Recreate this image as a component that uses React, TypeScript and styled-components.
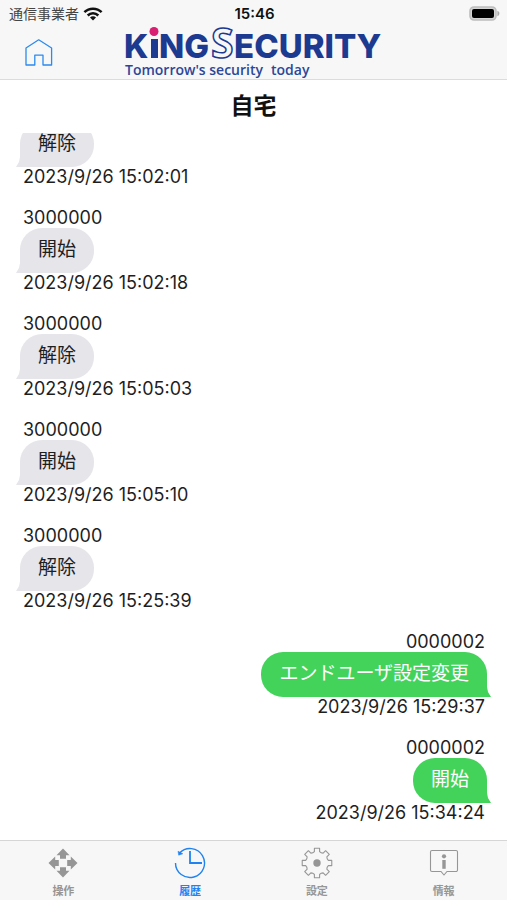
import React from "react";
import styled, { createGlobalStyle } from "styled-components";

const GlobalStyle = createGlobalStyle`
  * { box-sizing: border-box; }
  html, body, #root { height: 100%; }
  body {
    margin: 0;
    background: #fff;
    color: #1e1e1f;
    font-family: Inter, "Noto Sans CJK JP", "Liberation Sans", sans-serif;
  }
`;

const Screen = styled.div`
  display: flex;
  flex-direction: column;
  height: 100vh;
  overflow: hidden;
`;

const Header = styled.header`
  flex: none;
  background: #f7f7f7;
  border-bottom: 1px solid #dcdcdd;
`;

const StatusBar = styled.div`
  display: grid;
  grid-template-columns: 1fr auto 1fr;
  align-items: center;
  height: 27px;
  padding: 0 7px 0 9px;
`;

const Carrier = styled.div`
  display: flex;
  align-items: center;
  gap: 4px;
  font-size: 14px;
  line-height: 20px;
  color: #444;
`;

const Clock = styled.time`
  font-size: 15px;
  font-weight: 600;
  line-height: 20px;
  color: #111;
`;

const Battery = styled.svg`
  justify-self: end;
`;

const NavBar = styled.div`
  display: grid;
  grid-template-columns: 1fr auto 1fr;
  align-items: center;
  height: 52px;
  padding: 0 24px;
`;

const IconButton = styled.button`
  display: flex;
  justify-self: start;
  padding: 0;
  border: 0;
  background: none;
  color: #2b8af0;
  cursor: pointer;
`;

const LogoMark = styled.svg`
  overflow: visible;
`;

const Title = styled.h1`
  flex: none;
  margin: 0;
  padding: 10px 0 11px;
  text-align: center;
  font-size: 23px;
  font-weight: 700;
  line-height: 32px;
  color: #111;
`;

const Log = styled.ol`
  display: flex;
  flex: 1;
  flex-direction: column;
  justify-content: flex-end;
  gap: 21px;
  min-height: 0;
  margin: 0;
  padding: 0 20px 17px;
  overflow: hidden;
  list-style: none;
`;

const Entry = styled.li<{ $own: boolean }>`
  display: flex;
  flex: none;
  flex-direction: column;
  align-items: ${(p) => (p.$own ? "flex-end" : "flex-start")};
`;

const Meta = styled.span`
  padding: 0 2px 0 3px;
  font-size: 18px;
  line-height: 20px;
`;

const Bubble = styled.p<{ $own: boolean }>`
  position: relative;
  margin: 0;
  padding: 8px 18px 9px;
  border-radius: ${(p) => (p.$own ? "22px 22px 0 22px" : "22px 22px 22px 0")};
  background: ${(p) => (p.$own ? "#43d35b" : "#e5e5ea")};
  color: ${(p) => (p.$own ? "#fff" : "#1e1e1f")};
  font-size: 19px;
  line-height: 28px;

  &::after {
    content: "";
    position: absolute;
    bottom: 0;
    ${(p) => (p.$own ? "right: -4px;" : "left: -4px;")}
    width: 5px;
    height: 10px;
    background: inherit;
    clip-path: ${(p) =>
      p.$own
        ? "polygon(0 0, 20% 0, 40% 50%, 100% 100%, 0 100%)"
        : "polygon(100% 0, 80% 0, 60% 50%, 0 100%, 100% 100%)"};
  }
`;

const TabBar = styled.nav`
  display: grid;
  flex: none;
  grid-template-columns: repeat(4, 1fr);
  height: 60px;
  border-top: 1px solid #d6d6d7;
  background: #f7f7f7;
`;

const Tab = styled.button<{ $active: boolean }>`
  display: flex;
  flex-direction: column;
  align-items: center;
  gap: 4px;
  padding: 6px 0 0;
  border: 0;
  background: none;
  color: ${(p) => (p.$active ? "#1f83f2" : "#969696")};
  font-family: inherit;
  font-size: 11px;
  font-weight: 700;
  line-height: 16px;
  cursor: pointer;
`;

const WifiIcon = () => (
  <svg width="20" height="14" viewBox="0 0 20 14" aria-hidden="true">
    <g fill="none" stroke="#111" strokeWidth="2.5">
      <path d="M1.4 5.2a12.2 12.2 0 0 1 17.2 0" />
      <path d="M4.7 8.5a7.5 7.5 0 0 1 10.6 0" />
    </g>
    <path d="M10 13.4L7 10.5a4.2 4.2 0 0 1 6 0z" fill="#111" />
  </svg>
);

const BatteryIcon = () => (
  <Battery width="31" height="15" viewBox="0 0 31 15" aria-hidden="true">
    <rect x="1" y="1" width="26" height="13" rx="4" fill="#d4d4d4" stroke="#bdbdbd" strokeWidth="1.6" />
    <rect x="3" y="3" width="22" height="9" rx="2" fill="#000" />
    <path d="M28.4 4.8c1.2.4 2 1.5 2 2.7s-.8 2.3-2 2.7z" fill="#aaa" />
  </Battery>
);

const HomeIcon = () => (
  <svg width="30" height="30" viewBox="0 0 30 30" aria-hidden="true">
    <path
      d="M2 27V10L14.7 1.8L27.6 10V27H19V17.2H10.8V27Z"
      fill="none"
      stroke="currentColor"
      strokeWidth="1.3"
      strokeLinejoin="round"
    />
  </svg>
);

const Logo = () => (
  <LogoMark width="262" height="52" viewBox="0 0 262 52" role="img" aria-label="KING SECURITY">
    <g fill="#1d3a91" fontFamily="Inter, sans-serif" fontSize="33" fontWeight="800">
      <text x="1" y="31">K</text>
      <rect x="28" y="12" width="7" height="19" />
      <text x="36" y="31">NG</text>
      <text x="111" y="31">ECURITY</text>
    </g>
    <circle cx="31" cy="4.5" r="4.5" fill="#d81f72" />
    <text
      x="88"
      y="31"
      fill="#f7f7f7"
      stroke="#1d3a91"
      strokeWidth="1.5"
      fontFamily="Open Sans, sans-serif"
      fontSize="41"
      fontWeight="700"
    >
      S
    </text>
    <g fill="#2c4799" fontFamily="Open Sans, sans-serif" fontSize="14" fontWeight="600">
      <text x="2" y="48">Tomorrow's security</text>
      <text x="148" y="48">today</text>
    </g>
  </LogoMark>
);

const MoveIcon = () => (
  <svg width="32" height="32" viewBox="0 0 32 32" fill="currentColor" aria-hidden="true">
    {[0, 90, 180, 270].map((angle) => (
      <path
        key={angle}
        d="M16 1.5L22.5 8.2H19V11.8H13V8.2H9.5Z"
        transform={`rotate(${angle} 16 16)`}
      />
    ))}
  </svg>
);

const HistoryIcon = () => (
  <svg width="32" height="32" viewBox="0 0 32 32" fill="none" stroke="currentColor" aria-hidden="true">
    <path d="M1.5 16A14.5 14.5 0 1 0 5.5 6" strokeWidth="1.4" />
    <path d="M16 4V16H28" strokeWidth="1.8" />
    <path d="M4 4.2L4.7 8.2L8.8 6.8Z" fill="currentColor" strokeWidth="0.5" />
  </svg>
);

const GEAR_TEETH = 8;
const gearPoint = (radius: number, degrees: number) => {
  const a = (degrees * Math.PI) / 180;
  return `${(16 + radius * Math.sin(a)).toFixed(2)} ${(16 - radius * Math.cos(a)).toFixed(2)}`;
};
const gearPath =
  Array.from({ length: GEAR_TEETH }, (_, i) => {
    const c = (i * 360) / GEAR_TEETH;
    return [
      `${i ? "L" : "M"}${gearPoint(11.6, c - 13)}`,
      `L${gearPoint(15, c - 10)}`,
      `L${gearPoint(15, c + 10)}`,
      `L${gearPoint(11.6, c + 13)}`,
      `Q${gearPoint(10.6, c + 22.5)} ${gearPoint(11.6, c + 32)}`,
    ].join("");
  }).join("") + "Z";

const GearIcon = () => (
  <svg width="32" height="32" viewBox="0 0 32 32" aria-hidden="true">
    <path d={gearPath} fill="none" stroke="currentColor" strokeWidth="1.1" strokeLinejoin="round" />
    <circle cx="16" cy="16" r="3.7" fill="currentColor" />
  </svg>
);

const InfoIcon = () => (
  <svg width="32" height="32" viewBox="0 0 32 32" aria-hidden="true">
    <path
      d="M4 3.5H28A1.5 1.5 0 0 1 29.5 5V23A1.5 1.5 0 0 1 28 24.5H19L16 28L13 24.5H4A1.5 1.5 0 0 1 2.5 23V5A1.5 1.5 0 0 1 4 3.5Z"
      fill="none"
      stroke="currentColor"
      strokeWidth="1.1"
    />
    <circle cx="16" cy="9.3" r="2.1" fill="currentColor" />
    <rect x="14.3" y="13" width="3.4" height="8.8" fill="currentColor" />
  </svg>
);

interface LogEntry {
  id?: string;
  text: string;
  at: string;
  own: boolean;
}

const entries: LogEntry[] = [
  { text: "解除", at: "2023/9/26 15:02:01", own: false },
  { id: "3000000", text: "開始", at: "2023/9/26 15:02:18", own: false },
  { id: "3000000", text: "解除", at: "2023/9/26 15:05:03", own: false },
  { id: "3000000", text: "開始", at: "2023/9/26 15:05:10", own: false },
  { id: "3000000", text: "解除", at: "2023/9/26 15:25:39", own: false },
  { id: "0000002", text: "エンドユーザ設定変更", at: "2023/9/26 15:29:37", own: true },
  { id: "0000002", text: "開始", at: "2023/9/26 15:34:24", own: true },
];

const tabs = [
  { label: "操作", Icon: MoveIcon, active: false },
  { label: "履歴", Icon: HistoryIcon, active: true },
  { label: "設定", Icon: GearIcon, active: false },
  { label: "情報", Icon: InfoIcon, active: false },
];

export default function App() {
  return (
    <>
      <GlobalStyle />
      <Screen lang="ja">
        <Header>
          <StatusBar>
            <Carrier>
              通信事業者
              <WifiIcon />
            </Carrier>
            <Clock>15:46</Clock>
            <BatteryIcon />
          </StatusBar>
          <NavBar>
            <IconButton type="button" aria-label="ホーム">
              <HomeIcon />
            </IconButton>
            <Logo />
          </NavBar>
        </Header>
        <Title>自宅</Title>
        <Log>
          {entries.map((entry) => (
            <Entry key={entry.at} $own={entry.own}>
              {entry.id && <Meta>{entry.id}</Meta>}
              <Bubble $own={entry.own}>{entry.text}</Bubble>
              <Meta as="time">{entry.at}</Meta>
            </Entry>
          ))}
        </Log>
        <TabBar>
          {tabs.map(({ label, Icon, active }) => (
            <Tab key={label} type="button" $active={active} aria-current={active ? "page" : undefined}>
              <Icon />
              {label}
            </Tab>
          ))}
        </TabBar>
      </Screen>
    </>
  );
}
